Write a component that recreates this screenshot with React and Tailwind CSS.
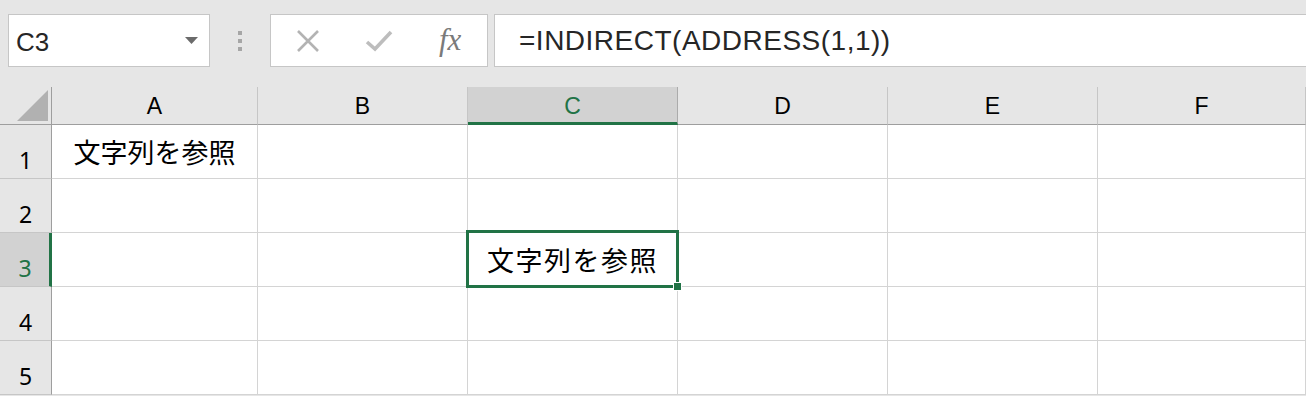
import React from 'react';

const cols = ['A', 'B', 'C', 'D', 'E', 'F'];
const rows = [1, 2, 3, 4, 5];

function Toolbar() {
  return (
    <div className="h-[87px] flex items-start pt-[14px] bg-[#e6e6e6]">
      <div className="ml-[8px] w-[202px] h-[53px] bg-white border border-[#c6c6c6] flex items-center justify-between pl-[7px] pr-[11px]">
        <span className="text-[26px] text-[#262626] leading-none mt-[2px]">C3</span>
        <svg width="13" height="8" viewBox="0 0 13 8">
          <path d="M0 0 L13 0 L6.5 7 Z" fill="#6b6b6b" />
        </svg>
      </div>
      <div className="w-[60px] h-[53px] flex flex-col items-center justify-center gap-[4px]">
        <div className="w-[4px] h-[4px] bg-[#a6a6a6]" />
        <div className="w-[4px] h-[4px] bg-[#a6a6a6]" />
        <div className="w-[4px] h-[4px] bg-[#a6a6a6]" />
      </div>
      <div className="w-[218px] h-[53px] bg-white border border-[#c6c6c6] flex items-center">
        <svg className="ml-[25px]" width="24" height="24" viewBox="0 0 24 24">
          <path d="M2 2 L22 22 M22 2 L2 22" stroke="#b3b3b3" strokeWidth="2.6" fill="none" />
        </svg>
        <svg className="ml-[45px]" width="28" height="24" viewBox="0 0 28 24">
          <path d="M2 13 L10 20 L26 3" stroke="#bdbdbd" strokeWidth="3.6" fill="none" />
        </svg>
        <span className="ml-[46px] text-[31px] italic text-[#7a7a7a] leading-none mb-[2px]" style={{ fontFamily: '"Liberation Serif", serif' }}>
          fx
        </span>
      </div>
      <div className="ml-[6px] flex-1 h-[53px] bg-white border border-r-0 border-[#c6c6c6] flex items-center pl-[24px]">
        <span className="text-[28px] text-[#262626] leading-none tracking-[0.5px] mt-[1px]">=INDIRECT(ADDRESS(1,1))</span>
      </div>
    </div>
  );
}

function Sheet() {
  return (
    <div className="grid grid-cols-[52px_206px_210px_210px_210px_210px_1fr] grid-rows-[38px_repeat(5,54px)]">
      <div className="bg-[#e6e6e6] border-b border-r border-[#9e9e9e] flex items-end justify-end pr-[3px] pb-[3px]">
        <svg width="31" height="31" viewBox="0 0 31 31">
          <path d="M31 0 L31 31 L0 31 Z" fill="#b1b1b1" />
        </svg>
      </div>
      {cols.map((c) => (
        <div
          key={c}
          className={
            c === 'C'
              ? 'bg-[#d2d2d2] border-b-[3px] border-b-[#217346] border-r border-r-[#ababab] flex items-center justify-center text-[23px] text-[#217346] pt-[3px]'
              : 'bg-[#e6e6e6] border-b border-b-[#9e9e9e] border-r border-r-[#c6c6c6] flex items-center justify-center text-[23px] text-black pt-[2px]'
          }
        >
          {c}
        </div>
      ))}
      {rows.map((r) => (
        <React.Fragment key={r}>
          <div
            className={
              r === 3
                ? 'bg-[#d2d2d2] border-r-[3px] border-r-[#217346] border-b border-b-[#c6c6c6] flex items-end justify-center pb-[6px] pl-[1px] text-[23px] leading-none text-[#217346]'
                : 'bg-[#e6e6e6] border-r border-r-[#9e9e9e] border-b border-b-[#c6c6c6] flex items-end justify-center pb-[6px] text-[23px] leading-none text-black'
            }
            style={{ fontFamily: '"Noto Sans", sans-serif' }}
          >
            {r}
          </div>
          {cols.map((c) => (
            <div key={c} className="relative bg-white border-r border-b border-[#d4d4d4] flex items-end justify-center pb-[13px]">
              {r === 1 && c === 'A' && (
                <span className="text-[27px] leading-none text-black" style={{ fontFamily: '"Noto Sans CJK JP", sans-serif' }}>
                  文字列を参照
                </span>
              )}
              {r === 3 && c === 'C' && (
                <>
                  <span className="text-[27px] leading-none text-black tracking-[1.5px]" style={{ fontFamily: '"Noto Sans CJK JP", sans-serif' }}>
                    文字列を参照
                  </span>
                  <div className="absolute z-10 top-[-3px] left-[-2px] right-[-2px] bottom-[-2px] border-[3px] border-[#217346]" />
                  <div className="absolute z-20 right-[-5px] bottom-[-5px] w-[9px] h-[9px] bg-[#217346] border border-white" />
                </>
              )}
            </div>
          ))}
        </React.Fragment>
      ))}
    </div>
  );
}

export default function App() {
  return (
    <div className="w-[1306px] h-[396px] overflow-hidden bg-[#e6e6e6]" style={{ fontFamily: '"Liberation Sans", Arial, sans-serif' }}>
      <Toolbar />
      <Sheet />
    </div>
  );
}
